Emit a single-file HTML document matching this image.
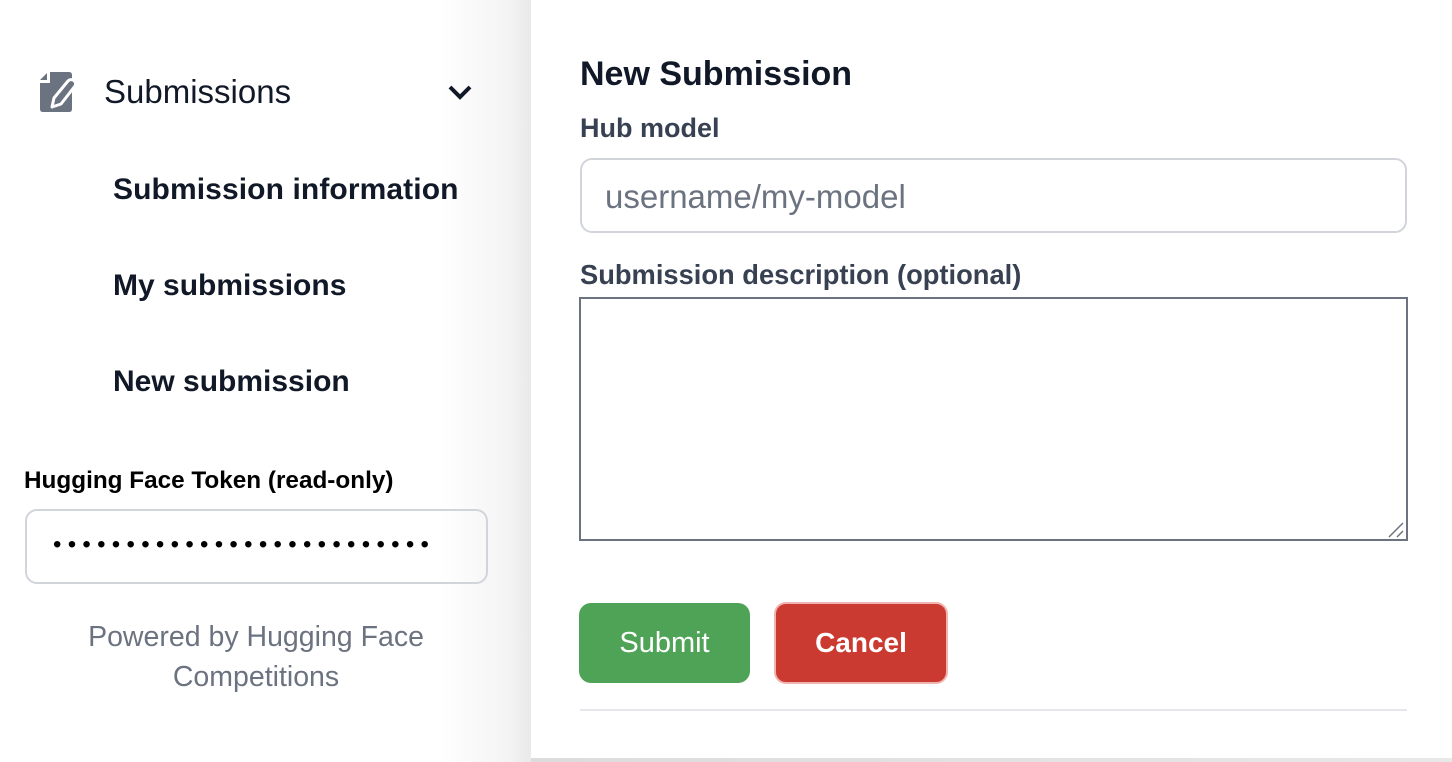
<!DOCTYPE html>
<html><head><meta charset="utf-8"><style>
*{box-sizing:border-box;margin:0;padding:0}
body{width:1452px;height:762px;overflow:hidden;background:#fff;font-family:"Liberation Sans",sans-serif;position:relative}
.side{position:absolute;left:0;top:0;width:531px;height:762px;background:linear-gradient(to right,#fff 0,#fff 440px,#f3f3f3 510px,#e9e9e9 531px)}
.main{position:absolute;left:531px;top:0;width:921px;height:758px;background:#fff}
.bot{position:absolute;left:531px;top:758px;width:921px;height:4px;background:linear-gradient(to right,#dcdcdc,#e8e8e8)}
.t{position:absolute;white-space:nowrap}
</style></head><body>
<div class="side"></div>
<div class="main"></div>
<div class="bot"></div>

<svg class="t" style="left:38px;top:70px" width="42" height="44" viewBox="0 0 42 44">
<path d="M12 2 H31 Q34 2 34 5 V39 Q34 42 31 42 H5 Q2 42 2 39 V13 H12 Z" fill="#6b7280"/>
<path d="M2 10 L9 3 V10 Z" fill="#6b7280"/>
<path d="M35 10 Q39 12 37 16 L23 34 L14 37 L16 28 L30 11 Q32 9 35 10 Z" fill="#6b7280" stroke="#fff" stroke-width="3" stroke-linejoin="round"/>
</svg>
<div class="t" style="left:104px;top:73px;font-size:33px;color:#111827">Submissions</div>
<svg class="t" style="left:447px;top:83px" width="26" height="18" viewBox="0 0 26 18"><path d="M3 4 L13 14 L23 4" fill="none" stroke="#111827" stroke-width="4"/></svg>
<div class="t" style="left:113px;top:173px;font-size:30px;font-weight:bold;color:#111827;letter-spacing:0.1px">Submission information</div>
<div class="t" style="left:113px;top:269px;font-size:30px;font-weight:bold;color:#111827">My submissions</div>
<div class="t" style="left:113px;top:365px;font-size:30px;font-weight:bold;color:#111827">New submission</div>
<div class="t" style="left:24px;top:467px;font-size:24.3px;font-weight:bold;color:#000">Hugging Face Token (read-only)</div>
<div class="t" style="left:25px;top:509px;width:463px;height:75px;border:2px solid #d1d5db;border-radius:12px"></div>
<div class="t" style="left:53px;top:531px;font-size:24px;color:#000;letter-spacing:6.3px">••••••••••••••••••••••••••</div>
<div class="t" style="left:0;width:512px;top:617px;text-align:center;font-size:28.5px;line-height:40px;color:#6b7280;white-space:normal">Powered by Hugging Face<br>Competitions</div>

<div class="t" style="left:580px;top:55px;font-size:34px;font-weight:bold;color:#111827">New Submission</div>
<div class="t" style="left:580px;top:113px;font-size:27px;font-weight:bold;color:#374151">Hub model</div>
<div class="t" style="left:580px;top:158px;width:827px;height:75px;border:2px solid #d1d5db;border-radius:12px"></div>
<div class="t" style="left:605px;top:178px;font-size:33px;color:#6b7280">username/my-model</div>
<div class="t" style="left:580px;top:259px;font-size:27.3px;font-weight:bold;color:#374151">Submission description (optional)</div>
<div class="t" style="left:579px;top:297px;width:829px;height:244px;border:2px solid #6b7280"></div>
<svg class="t" style="left:1386px;top:520px" width="20" height="20"><path d="M3 17 L17 3 M11 17 L17 11" stroke="#6b7280" stroke-width="1.5"/></svg>
<div class="t" style="left:579px;top:603px;width:171px;height:80px;background:#4ea357;border-radius:12px;color:#fff;font-size:29px;text-align:center;line-height:80px">Submit</div>
<div class="t" style="left:774px;top:602px;width:174px;height:82px;background:#cb3a31;border:2px solid #f0b4b0;border-radius:12px;color:#fff;font-size:28px;font-weight:bold;text-align:center;line-height:78px">Cancel</div>
<div class="t" style="left:580px;top:709px;width:827px;height:2px;background:#e5e7eb"></div>
</body></html>
